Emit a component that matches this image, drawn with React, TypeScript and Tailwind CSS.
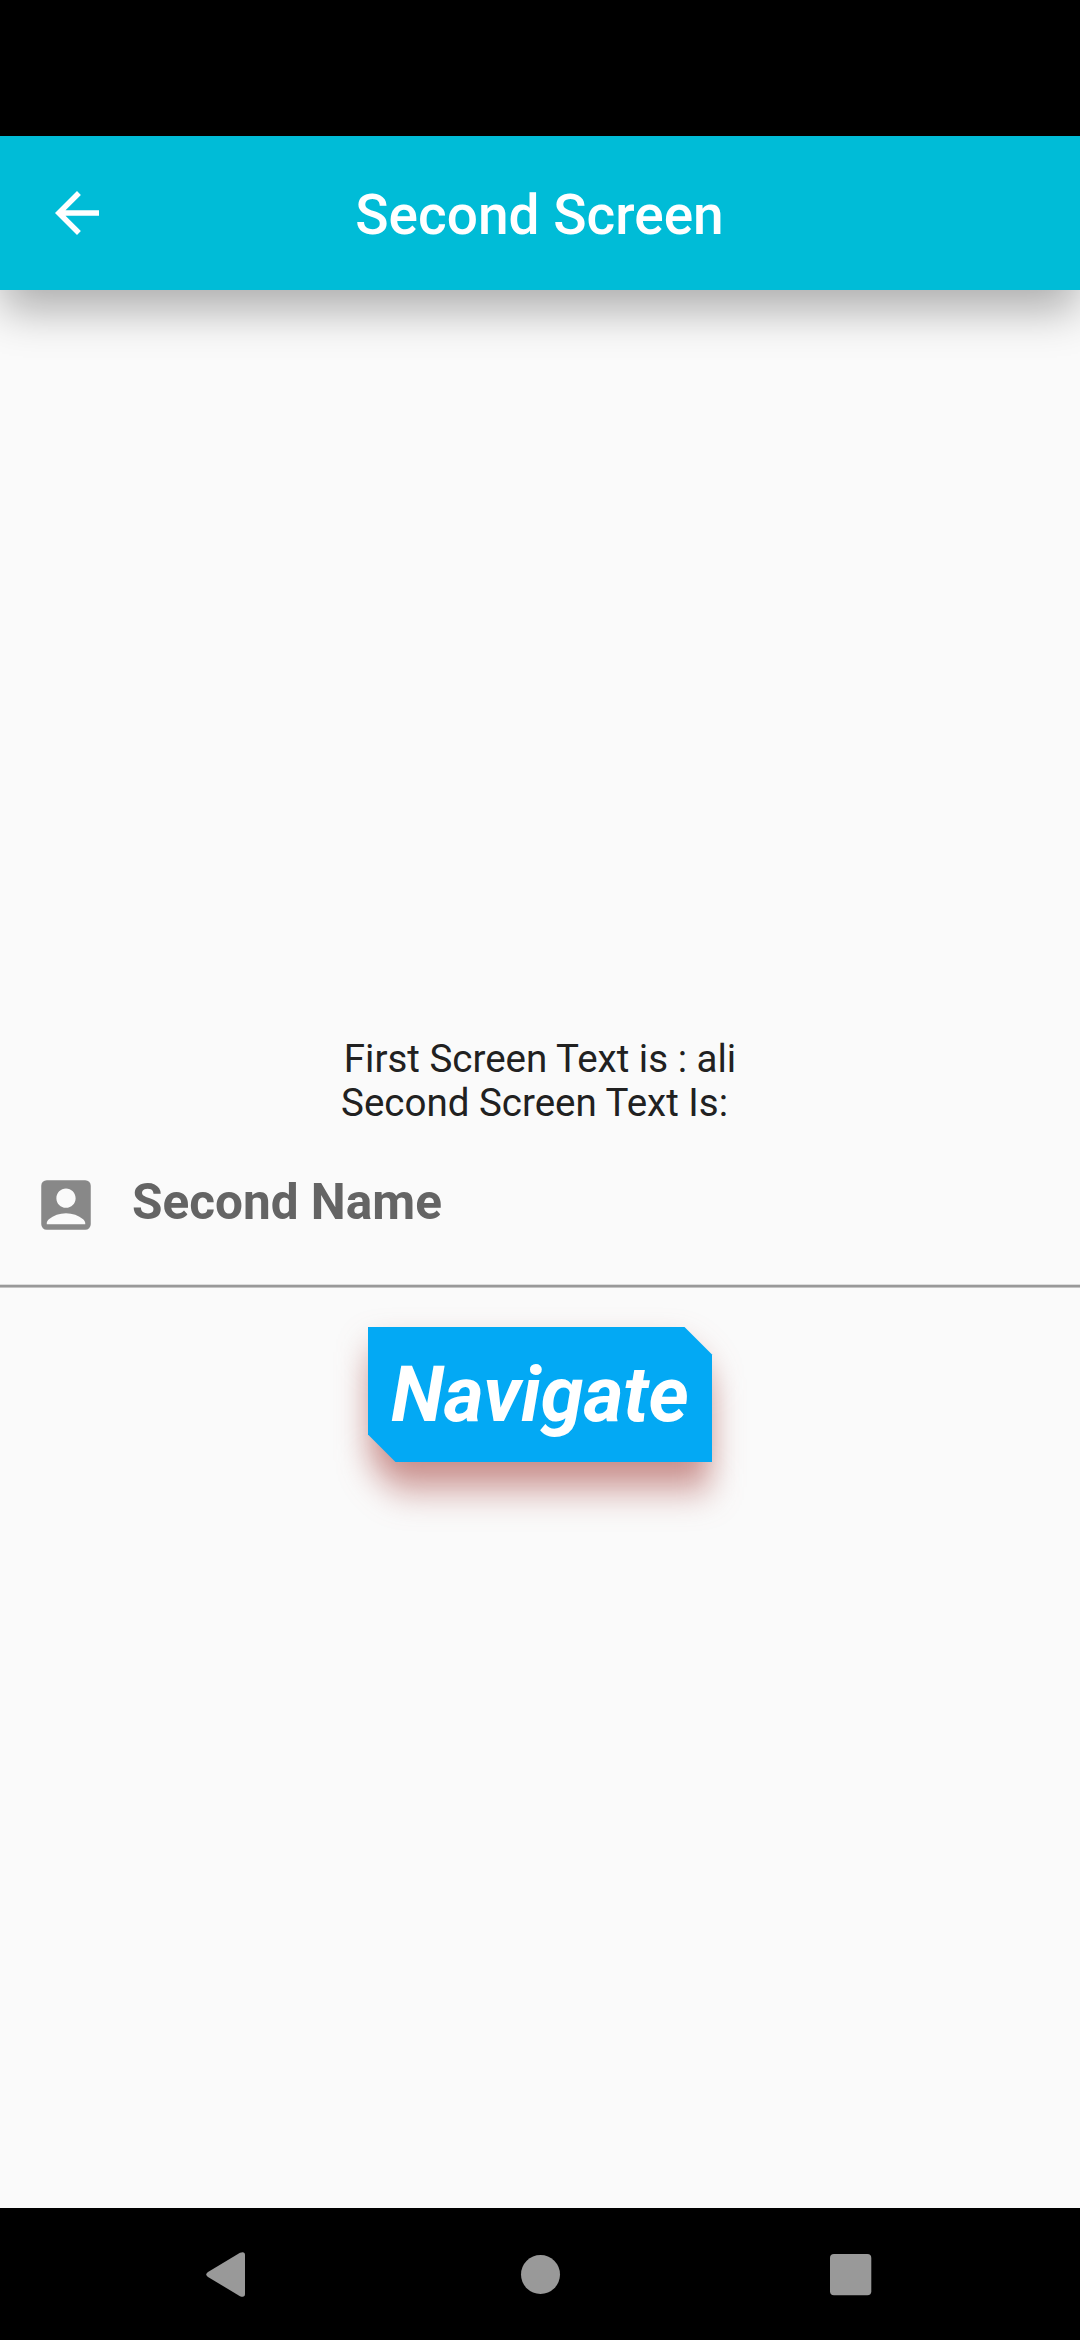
function BackArrow() {
  return (
    <svg viewBox="0 0 24 24" className="size-[66px] shrink-0 fill-white">
      <path d="M20 11H7.83l5.59-5.59L12 4l-8 8 8 8 1.41-1.41L7.83 13H20v-2z" />
    </svg>
  );
}

function AccountBox() {
  return (
    <svg viewBox="0 0 24 24" className="size-[66px] shrink-0 fill-[#888888]">
      <path d="M19 3H5a2 2 0 0 0-2 2v14a2 2 0 0 0 2 2h14a2 2 0 0 0 2-2V5a2 2 0 0 0-2-2zM12 6c1.93 0 3.5 1.57 3.5 3.5S13.93 13 12 13s-3.5-1.57-3.5-3.5S10.07 6 12 6zm7 13H5v-.23c0-.62.28-1.2.76-1.58C7.47 15.82 9.64 15 12 15s4.53.82 6.24 2.19c.48.38.76.97.76 1.58V19z" />
    </svg>
  );
}

function NavigateButton() {
  return (
    <button className="relative mt-[39px] h-[135px] w-[344px] self-center">
      <svg viewBox="0 0 344 135" className="absolute inset-0 size-full overflow-visible">
        <defs>
          <filter id="spot" x="-30%" y="-60%" width="160%" height="220%" colorInterpolationFilters="sRGB">
            <feGaussianBlur stdDeviation="16 19" />
          </filter>
        </defs>
        <path
          d="M0 0H316.5L344 27.5V135H27.5L0 107.5Z"
          transform="translate(2 25) scale(0.988 1)"
          fill="#a64641"
          fillOpacity="0.62"
          filter="url(#spot)"
        />
        <path d="M0 0H316.5L344 27.5V135H27.5L0 107.5Z" fill="#03a9f4" />
      </svg>
      <span className="relative block text-center text-[77px] leading-[90px] font-bold text-white italic">Navigate</span>
    </button>
  );
}

export default function App() {
  return (
    <div className="flex h-[2340px] w-[1080px] flex-col overflow-hidden bg-[#fafafa] font-['Roboto','Liberation_Sans',sans-serif]">
      <div className="h-[136px] shrink-0 bg-black" />
      <header className="z-10 flex h-[154px] shrink-0 items-center bg-[#00bcd7] px-[44px] shadow-[0_22px_42px_-2px_rgba(0,0,0,0.31)]">
        <BackArrow />
        <h1 className="flex-1 pt-[4px] pr-[67px] text-center text-[55px] leading-[64px] font-medium text-white">
          Second Screen
        </h1>
      </header>
      <main className="flex flex-1 flex-col">
        <p className="mt-[747px] text-center text-[38.5px] leading-[44px] text-[#212121]">First Screen Text is : ali</p>
        <p className="pr-[11px] text-center text-[38.5px] leading-[44px] text-[#212121]">Second Screen Text Is:</p>
        <div className="mt-[1px] flex h-[158px] items-start pt-[46px] pl-[33px]">
          <AccountBox />
          <label className="mt-[1px] ml-[33px] text-[49.5px] leading-[58px] font-bold text-[#646464]">Second Name</label>
        </div>
        <div className="h-[4px] border-t border-b border-t-[#dcdcdc] border-b-[#c4c4c4] bg-[#999999]" />
        <NavigateButton />
      </main>
      <nav className="flex h-[132px] shrink-0 items-center bg-black">
        <svg viewBox="0 0 1080 132" className="h-[132px] w-full fill-[#999999]">
          <path d="M208 64L240 44.800Q245 43 245 47V86Q245 90 240 88.200L208 69Q204.500 66.500 208 64Z" />
          <circle cx="540.5" cy="66.500" r="19.500" />
          <rect x="830" y="46" width="41.300" height="41.300" rx="4" />
        </svg>
      </nav>
    </div>
  );
}
